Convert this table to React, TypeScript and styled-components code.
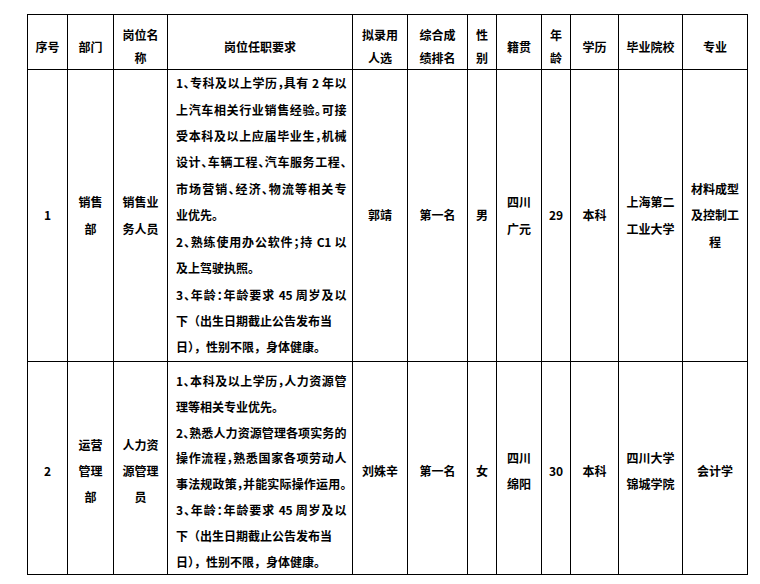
import React from "react";
import styled, { createGlobalStyle, css } from "styled-components";

const GlobalStyle = createGlobalStyle`
  html, body { margin: 0; padding: 0; background: #fff; }
  body {
    font-family: "Noto Sans CJK SC", "Noto Sans", "Liberation Sans", sans-serif;
    color: #000;
  }
`;

const Page = styled.div`
  padding: 14px 0 0 27px;
`;

const Table = styled.table`
  border-collapse: collapse;
  table-layout: fixed;
  width: 721px;
  font-size: 12px;
  font-weight: 700;
`;

const Col = styled.col<{ $w: number }>`
  width: ${(p) => p.$w}px;
`;

const Row = styled.tr<{ $h: number }>`
  height: ${(p) => p.$h}px;
`;

const HeadCell = styled.th`
  border: 1px solid #000;
  padding: 8px 7px 0;
  line-height: 23px;
  text-align: center;
  vertical-align: middle;
  font-weight: 700;
`;

const Cell = styled.td<{ $lh: number; $pt: number; $left?: boolean }>`
  border: 1px solid #000;
  padding: ${(p) => p.$pt}px ${(p) => (p.$left ? 5 : 7)}px 0 ${(p) => (p.$left ? 8 : 7)}px;
  line-height: ${(p) => p.$lh}px;
  text-align: ${(p) => (p.$left ? "left" : "center")};
  vertical-align: middle;
`;

const Line = styled.span<{ $fill?: boolean }>`
  display: block;
  white-space: nowrap;
  ${(p) =>
    p.$fill &&
    css`
      width: 170px;
      font-feature-settings: "halt";
      letter-spacing: -0.4px;
      text-align: justify;
      text-align-last: justify;
      white-space: normal;
    `}
`;

type Req = { t: string; f?: boolean };

const widths = [40, 46, 54, 185, 55, 60, 29, 45, 29, 48, 64, 65];

const header: string[][] = [
  ["序号"],
  ["部门"],
  ["岗位名", "称"],
  ["岗位任职要求"],
  ["拟录用", "人选"],
  ["综合成", "绩排名"],
  ["性", "别"],
  ["籍贯"],
  ["年", "龄"],
  ["学历"],
  ["毕业院校"],
  ["专业"],
];

type Person = {
  cells: string[][];
  req: Req[];
  after: string[][];
  h: number;
  lh: number;
  pt: number;
};

const rows: Person[] = [
  {
    cells: [["1"], ["销售", "部"], ["销售业", "务人员"]],
    req: [
      { t: "1、专科及以上学历，具有 2 年以", f: true },
      { t: "上汽车相关行业销售经验。可接", f: true },
      { t: "受本科及以上应届毕业生，机械", f: true },
      { t: "设计、车辆工程、汽车服务工程、", f: true },
      { t: "市场营销、经济、物流等相关专", f: true },
      { t: "业优先。" },
      { t: "2、熟练使用办公软件；持 C1 以", f: true },
      { t: "及上驾驶执照。" },
      { t: "3、年龄：年龄要求 45 周岁及以", f: true },
      { t: "下（出生日期截止公告发布当" },
      { t: "日），性别不限，身体健康。" },
    ],
    after: [
      ["郭靖"],
      ["第一名"],
      ["男"],
      ["四川", "广元"],
      ["29"],
      ["本科"],
      ["上海第二", "工业大学"],
      ["材料成型", "及控制工", "程"],
    ],
    h: 292,
    lh: 26.4,
    pt: 0,
  },
  {
    cells: [["2"], ["运营", "管理", "部"], ["人力资", "源管理", "员"]],
    req: [
      { t: "1、本科及以上学历，人力资源管", f: true },
      { t: "理等相关专业优先。" },
      { t: "2、熟悉人力资源管理各项实务的", f: true },
      { t: "操作流程，熟悉国家各项劳动人", f: true },
      { t: "事法规政策，并能实际操作运用。", f: true },
      { t: "3、年龄：年龄要求 45 周岁及以", f: true },
      { t: "下（出生日期截止公告发布当" },
      { t: "日），性别不限，身体健康。" },
    ],
    after: [
      ["刘姝辛"],
      ["第一名"],
      ["女"],
      ["四川", "绵阳"],
      ["30"],
      ["本科"],
      ["四川大学", "锦城学院"],
      ["会计学"],
    ],
    h: 213,
    lh: 25.8,
    pt: 6,
  },
];

const Lines = ({ lines }: { lines: string[] }) => (
  <>
    {lines.map((l, i) => (
      <Line key={i}>{l}</Line>
    ))}
  </>
);

export default function App() {
  return (
    <>
      <GlobalStyle />
      <Page>
        <Table>
          <colgroup>
            {widths.map((w, i) => (
              <Col key={i} $w={w} />
            ))}
          </colgroup>
          <thead>
            <Row $h={54}>
              {header.map((h, i) => (
                <HeadCell key={i}>
                  <Lines lines={h} />
                </HeadCell>
              ))}
            </Row>
          </thead>
          <tbody>
            {rows.map((r, ri) => (
              <Row key={ri} $h={r.h}>
                {r.cells.map((c, i) => (
                  <Cell key={i} $lh={r.lh} $pt={r.pt}>
                    <Lines lines={c} />
                  </Cell>
                ))}
                <Cell $lh={r.lh} $pt={r.pt} $left>
                  {r.req.map((q, i) => (
                    <Line key={i} $fill={q.f}>
                      {q.t}
                    </Line>
                  ))}
                </Cell>
                {r.after.map((c, i) => (
                  <Cell key={i} $lh={r.lh} $pt={r.pt}>
                    <Lines lines={c} />
                  </Cell>
                ))}
              </Row>
            ))}
          </tbody>
        </Table>
      </Page>
    </>
  );
}
